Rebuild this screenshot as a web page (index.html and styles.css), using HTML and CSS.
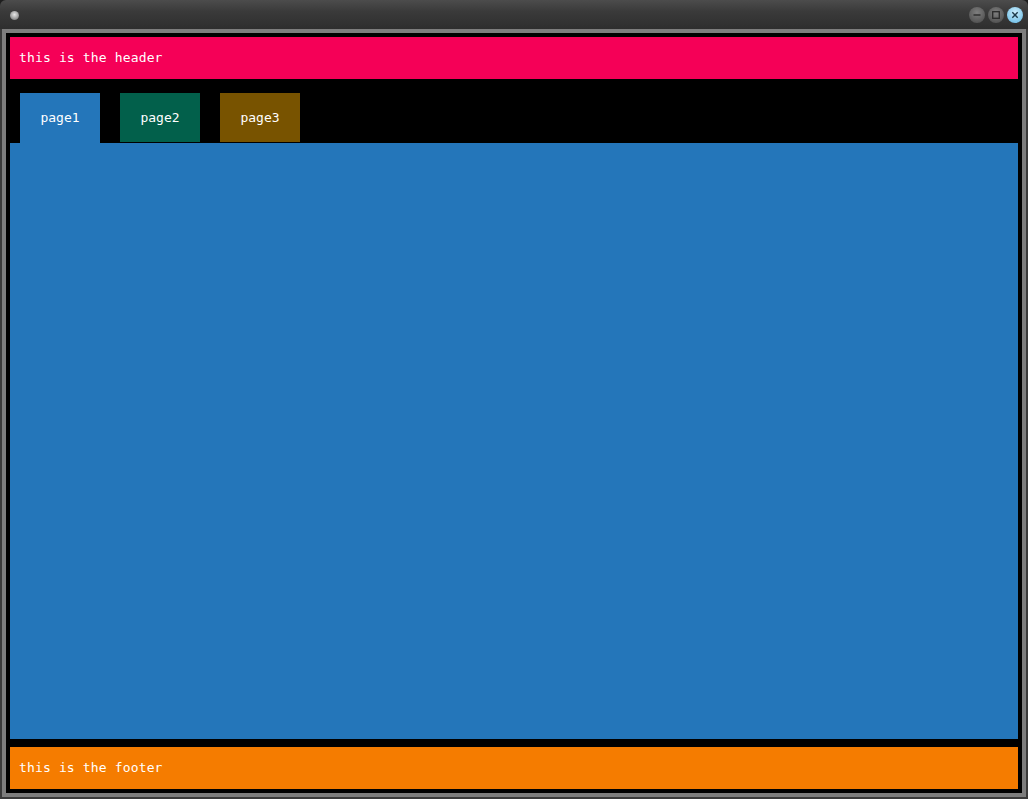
FILE: index.html
```html
<!DOCTYPE html>
<html>
<head>
<meta charset="utf-8">
<link rel="stylesheet" href="styles.css">
</head>
<body>
<div class="window">
  <div class="titlebar">
    <span class="app-icon"></span>
    <div class="controls">
      <span class="ctl ctl-min"><svg width="16" height="16" viewBox="0 0 16 16"><line x1="4.5" y1="8" x2="11.5" y2="8" stroke="#2a2a2a" stroke-width="1.4"/></svg></span>
      <span class="ctl ctl-max"><svg width="16" height="16" viewBox="0 0 16 16"><rect x="4.7" y="4.7" width="6.6" height="6.6" fill="none" stroke="#2a2a2a" stroke-width="1.3"/></svg></span>
      <span class="ctl ctl-close"><svg width="16" height="16" viewBox="0 0 16 16"><path d="M5.3 5.3 L10.7 10.7 M10.7 5.3 L5.3 10.7" stroke="#1d3a4a" stroke-width="1.4"/></svg></span>
    </div>
  </div>
  <div class="frame">
    <div class="frame-gray">
      <div class="app">
        <div class="header">this is the header</div>
        <div class="tabs">
          <div class="tab tab-active">page1</div>
          <div class="tab tab-green">page2</div>
          <div class="tab tab-brown">page3</div>
        </div>
        <div class="content"></div>
        <div class="footer">this is the footer</div>
      </div>
    </div>
  </div>
</div>
</body>
</html>
```

FILE: styles.css
```css
html, body {
  margin: 0;
  padding: 0;
  background: #1e1e1e;
}

.window {
  width: 1028px;
  height: 799px;
  display: flex;
  flex-direction: column;
  font-family: "DejaVu Sans Mono", "Liberation Mono", monospace;
}

.titlebar {
  height: 29px;
  flex: none;
  background: linear-gradient(#4c4c4c, #3a3a3a 40%, #2e2e2e);
  border-radius: 6px 6px 0 0;
  display: flex;
  align-items: center;
  justify-content: space-between;
  padding: 0 5px 0 10px;
  box-sizing: border-box;
}

.app-icon {
  width: 9px;
  height: 9px;
  border-radius: 50%;
  background: radial-gradient(circle at 50% 40%, #e8e8e8, #9a9a9a 60%, #5a5a5a);
  margin-top: 2px;
}

.controls {
  display: flex;
  gap: 3px;
  margin-top: 1px;
}

.ctl {
  width: 16px;
  height: 16px;
  border-radius: 50%;
  display: block;
}

.ctl svg {
  display: block;
}

.ctl-min, .ctl-max {
  background: radial-gradient(circle at 50% 35%, #7e7e7e, #555 75%);
}

.ctl-close {
  background: radial-gradient(circle at 50% 35%, #cdeefc, #7fc6ea 70%, #5aa9d4);
}

.frame {
  flex: 1;
  background: #3a3a3a;
  padding: 0 2px 2px 2px;
  display: flex;
}

.frame-gray {
  flex: 1;
  background: #7d7d7d;
  padding: 4px;
  display: flex;
}

.app {
  flex: 1;
  background: #000;
  padding: 4px;
  display: flex;
  flex-direction: column;
}

.header, .footer {
  height: 42px;
  flex: none;
  color: #fff;
  font-size: 13px;
  letter-spacing: 0.15px;
  padding-left: 9px;
  padding-bottom: 2px;
  box-sizing: border-box;
  display: flex;
  align-items: center;
}

.header {
  background: #f50057;
}

.footer {
  background: #f57c00;
  margin-top: 8px;
}

.tabs {
  margin-top: 14px;
  height: 50px;
  flex: none;
  display: flex;
  align-items: flex-start;
  gap: 20px;
  padding-left: 10px;
}

.tab {
  width: 80px;
  height: 49px;
  color: #fff;
  font-size: 13px;
  padding-bottom: 1px;
  box-sizing: border-box;
  display: flex;
  align-items: center;
  justify-content: center;
}

.tab-active {
  height: 50px;
  background: #2476ba;
  padding-bottom: 2px;
}

.tab-green {
  background: #02604b;
}

.tab-brown {
  background: #785300;
}

.content {
  flex: 1;
  background: #2476ba;
}
```
